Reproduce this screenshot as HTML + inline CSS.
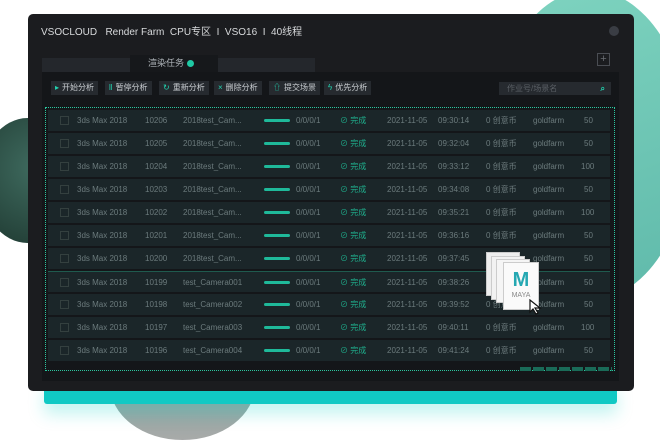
<!DOCTYPE html><html><head><meta charset="utf-8"><style>
*{margin:0;padding:0;box-sizing:border-box}
body{width:660px;height:439px;background:#fff;position:relative;overflow:hidden;font-family:"Liberation Sans","Noto Sans CJK SC",sans-serif}
.abs{position:absolute}
.row{position:absolute;left:48px;width:562px;height:21px;background:#1b2629;font-size:8px;color:#6c7b7d;line-height:21px}
.row span{position:absolute;top:0;white-space:nowrap}
.cb{position:absolute;left:12px;top:6px;width:9px;height:9px;border:1px solid #34403f}
.bar{position:absolute;left:216px;top:9px;width:26px;height:3px;border-radius:2px;background:#1fb99a}
.btn{position:absolute;top:81px;height:14px;background:#262a2f;color:#c8ccd0;font-size:8px;line-height:14px;padding:0 4px;white-space:nowrap}
.btn i{font-style:normal;color:#22d3b0;margin-right:3px}
</style></head><body>
<div class="abs" style="left:-20px;top:118px;width:95px;height:125px;border-radius:50%;background:radial-gradient(circle at 60% 40%,#3f6b5f,#1e3830)"></div>
<div class="abs" style="left:490px;top:-10px;width:200px;height:310px;border-radius:50%;background:linear-gradient(160deg,#7fd4c0,#5fb9aa)"></div>
<div class="abs" style="left:110px;top:330px;width:145px;height:110px;border-radius:50%;background:linear-gradient(180deg,#6a9c95,#a8aaa9)"></div>
<div class="abs" style="left:44px;top:380px;width:573px;height:24px;border-radius:3px;background:#10c9c4;box-shadow:0 10px 16px rgba(20,210,200,0.25)"></div>
<div class="abs" style="left:28px;top:14px;width:606px;height:377px;border-radius:5px;background:#1b1c1f"></div>
<div class="abs" style="left:41px;top:23px;font-size:10px;color:#d8dadc;white-space:nowrap">VSOCLOUD&nbsp;&nbsp; Render Farm&nbsp; CPU专区&nbsp; I&nbsp; VSO16&nbsp; I&nbsp; 40线程</div>
<div class="abs" style="left:609px;top:26px;width:10px;height:10px;border-radius:50%;background:#3a3d44"></div>
<div class="abs" style="left:42px;top:58px;width:88px;height:14px;background:#24272c"></div>
<div class="abs" style="left:218px;top:58px;width:97px;height:14px;background:#24272c"></div>
<div class="abs" style="left:130px;top:55px;width:88px;height:17px;background:#16181b;color:#aeb3b8;font-size:9px;line-height:17px;padding-left:18px">渲染任务 <span style="display:inline-block;width:7px;height:7px;border-radius:50%;background:#1fc9a4;vertical-align:middle"></span></div>
<div class="abs" style="left:597px;top:53px;width:13px;height:13px;border:1px solid #4a4d53;color:#6a6d73;font-size:11px;line-height:10px;text-align:center">+</div>
<div class="abs" style="left:42px;top:72px;width:577px;height:309px;background:#141619"></div>
<div class="btn" style="left:51px"><i>▸</i>开始分析</div>
<div class="btn" style="left:105px"><i>ll</i>暂停分析</div>
<div class="btn" style="left:159px"><i>↻</i>重新分析</div>
<div class="btn" style="left:214px"><i>×</i>删除分析</div>
<div class="btn" style="left:269px"><i>⇧</i>提交场景</div>
<div class="btn" style="left:324px"><i>ϟ</i>优先分析</div>
<div class="abs" style="left:499px;top:82px;width:112px;height:13px;background:#262a2f;color:#5b6066;font-size:8px;line-height:13px;padding-left:8px">作业号/场景名<span style="position:absolute;right:6px;color:#22d3b0;font-weight:bold">⌕</span></div>
<div class="abs" style="left:45px;top:107px;width:570px;height:264px;border:1px dotted #2bc79f"></div>
<div class="abs" style="left:520px;top:367px;width:92px;height:4px;background:repeating-linear-gradient(90deg,#1a6b58 0 11px,transparent 11px 13px)"></div>
<div id="rows"></div>
<script>
const d=[["10206","2018test_Cam...","09:30:14","50"],["10205","2018test_Cam...","09:32:04","50"],["10204","2018test_Cam...","09:33:12","100"],["10203","2018test_Cam...","09:34:08","50"],["10202","2018test_Cam...","09:35:21","100"],["10201","2018test_Cam...","09:36:16","50"],["10200","2018test_Cam...","09:37:45","50"],["10199","test_Camera001","09:38:26","50"],["10198","test_Camera002","09:39:52","50"],["10197","test_Camera003","09:40:11","100"],["10196","test_Camera004","09:41:24","50"]];
let h="";d.forEach((r,i)=>{const y=110+i*23;h+=`<div class="row" style="top:${y}px${i==7?';border-top:1px solid #1f5a4e':''}"><div class="cb"></div><span style="left:29px">3ds Max 2018</span><span style="left:97px">${r[0]}</span><span style="left:135px">${r[1]}</span><div class="bar"></div><span style="left:248px">0/0/0/1</span><span style="left:292px;color:#1fae8c">⊘ 完成</span><span style="left:339px">2021-11-05</span><span style="left:390px">${r[2]}</span><span style="left:438px">0 创意币</span><span style="left:485px">goldfarm</span><span style="left:${r[3].length>2?533:536}px">${r[3]}</span></div>`});
document.getElementById("rows").innerHTML=h;
</script>
<div class="abs" style="left:486px;top:252px;width:34px;height:44px;background:#eeeeee;border:1px solid #ccc"></div>
<div class="abs" style="left:491px;top:256px;width:34px;height:44px;background:#f2f2f2;border:1px solid #ccc"></div>
<div class="abs" style="left:496px;top:259px;width:34px;height:44px;background:#f5f5f5;border:1px solid #ccc"></div>
<div class="abs" style="left:503px;top:262px;width:36px;height:48px;background:#fafafa;border:1px solid #ccc;text-align:center"><div style="color:#25a8b2;font-weight:bold;font-size:20px;line-height:24px;margin-top:5px">M</div><div style="color:#888;font-size:7px">MAYA</div></div>
<svg class="abs" style="left:529px;top:299px" width="14" height="16" viewBox="0 0 14 16"><path d="M1 1 L1 13 L4 10 L7 15 L9 14 L6 9 L11 9 Z" fill="#fff" stroke="#111" stroke-width="1.2"/></svg>
</body></html>
